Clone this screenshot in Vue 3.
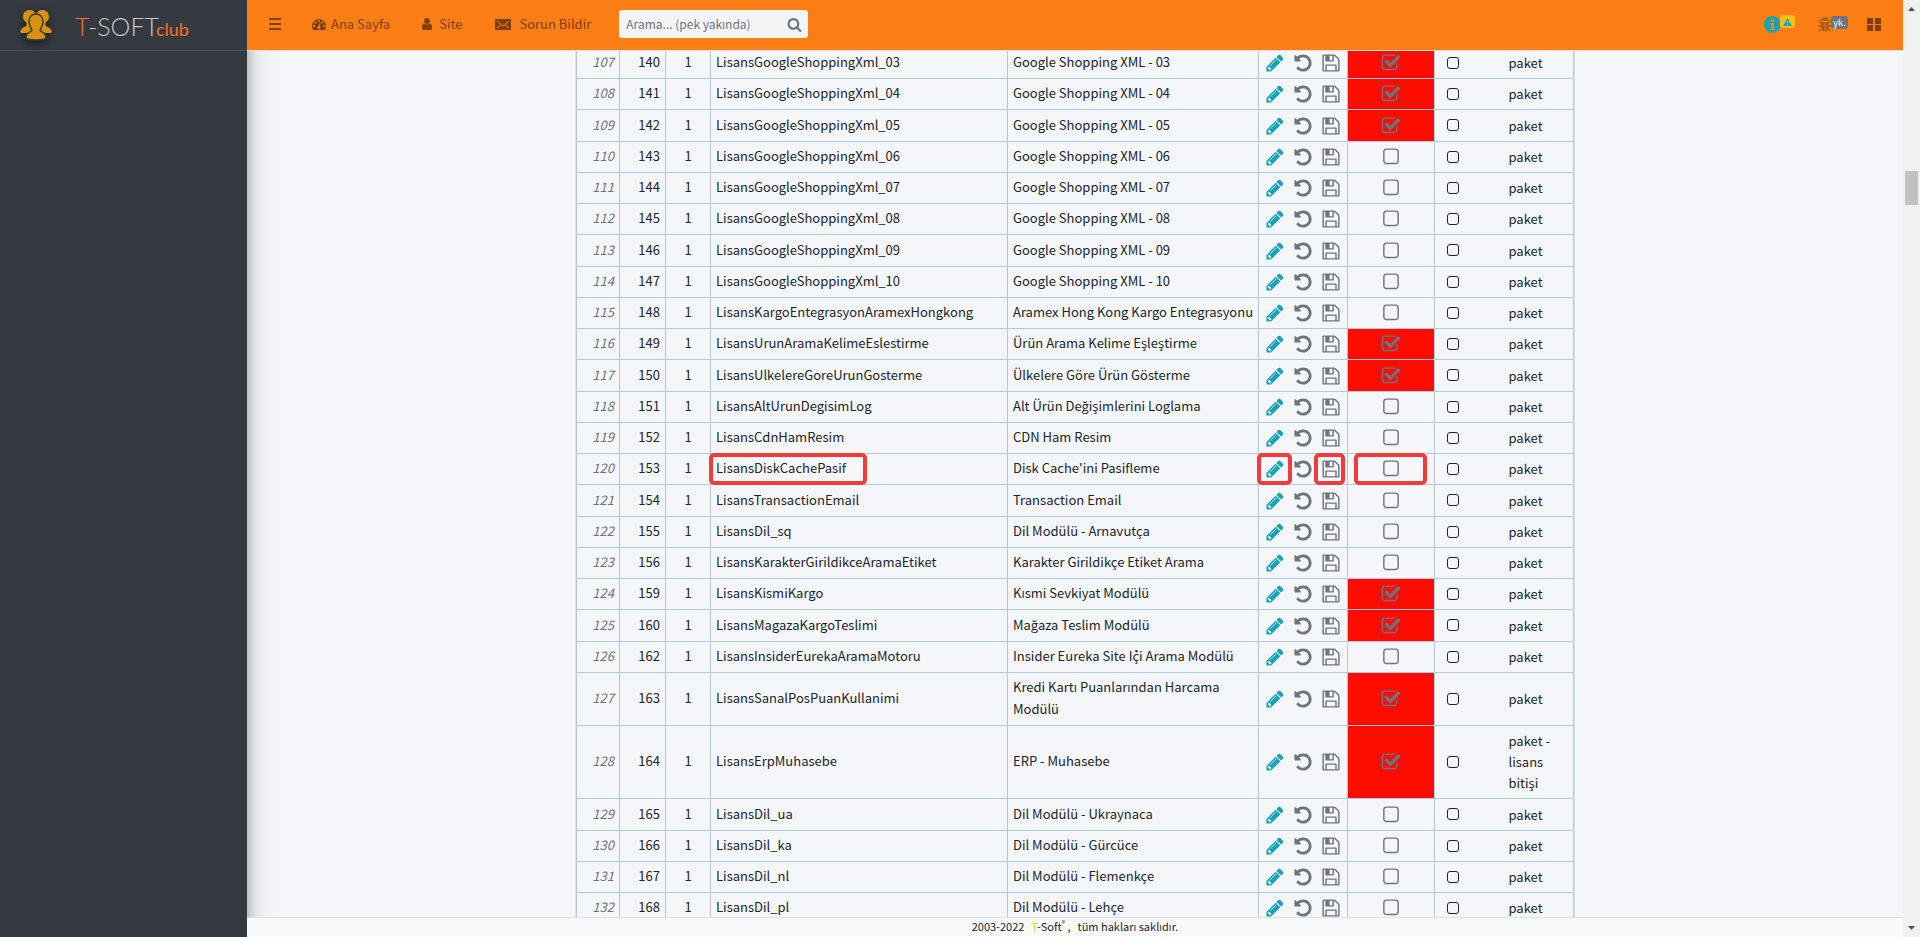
<script setup>
import { ref } from 'vue'

const icons = {
  pencil: 'M491 1536l91-91-235-235-91 91v107h128v128h107zm523-928q0-22-22-22-10 0-17 7l-542 542q-7 7-7 17 0 22 22 22 10 0 17-7l542-542q7-7 7-17zm-54-192l416 416-832 832h-416v-416zm683 96q0 53-37 90l-166 166-416-416 166-165q36-38 90-38 53 0 91 38l235 234q37 39 37 91z',
  undo: 'M1664 896q0 156-61 298t-164 245-245 164-298 61q-172 0-327-72.5t-264-204.5q-7-10-6.5-22.5t8.5-20.5l137-138q10-9 25-9 16 2 23 12 73 95 179 147t225 52q104 0 198.5-40.5t163.5-109.5 109.5-163.5 40.5-198.5-40.5-198.5-109.5-163.5-163.5-109.5-198.5-40.5q-98 0-188 35.5t-160 101.5l137 138q31 30 14 69-17 40-59 40h-448q-26 0-45-19t-19-45v-448q0-42 40-59 39-17 69 14l130 129q107-101 244.5-156.5t284.5-55.5q156 0 298 61t245 164 164 245 61 298z',
  save: 'M512 1536h768v-384h-768v384zm896 0h128v-896q0-14-10-38.5t-20-34.5l-281-281q-10-10-34-20t-39-10v416q0 40-28 68t-68 28h-576q-40 0-68-28t-28-68v-416h-128v1280h128v-416q0-40 28-68t68-28h832q40 0 68 28t28 68v416zm-384-928v-320q0-13-9.5-22.5t-22.5-9.5h-192q-13 0-22.5 9.5t-9.5 22.5v320q0 13 9.5 22.5t22.5 9.5h192q13 0 22.5-9.5t9.5-22.5zm640 32v928q0 40-28 68t-68 28h-1344q-40 0-68-28t-28-68v-1344q0-40 28-68t68-28h928q40 0 88 20t76 48l280 280q28 28 48 76t20 88z',
  checked: 'M1472 930v318q0 119-84.5 203.5t-203.5 84.5h-832q-119 0-203.5-84.5t-84.5-203.5v-832q0-119 84.5-203.5t203.5-84.5h832q63 0 117 25 15 7 18 23 3 17-9 29l-49 49q-10 10-23 10-3 0-9-2-23-6-45-6h-832q-66 0-113 47t-47 113v832q0 66 47 113t113 47h832q66 0 113-47t47-113v-254q0-13 9-22l64-64q10-10 23-10 6 0 12 3 20 8 20 29zm231-489l-814 814q-24 24-57 24t-57-24l-430-430q-24-24-24-57t24-57l110-110q24-24 57-24t57 24l263 263 647-647q24-24 57-24t57 24l110 110q24 24 24 57t-24 57z',
  empty: 'M1312 256h-832q-66 0-113 47t-47 113v832q0 66 47 113t113 47h832q66 0 113-47t47-113v-832q0-66-47-113t-113-47zm288 160v832q0 119-84.5 203.5t-203.5 84.5h-832q-119 0-203.5-84.5t-84.5-203.5v-832q0-119 84.5-203.5t203.5-84.5h832q119 0 203.5 84.5t84.5 203.5z',
  dash: 'M384 1152q0-53-37.5-90.5t-90.5-37.5-90.5 37.5-37.5 90.5 37.5 90.5 90.5 37.5 90.5-37.5 37.5-90.5zm192-448q0-53-37.5-90.5t-90.5-37.5-90.5 37.5-37.5 90.5 37.5 90.5 90.5 37.5 90.5-37.5 37.5-90.5zm428 481l101-382q6-26-7.5-48.5t-38.5-29.5-48 6.5-30 39.5l-101 382q-60 5-107 43.5t-63 98.5q-20 77 20 146t117 89 146-20 89-117q16-60-6-117t-72-91zm660-33q0-53-37.5-90.5t-90.5-37.5-90.5 37.5-37.5 90.5 37.5 90.5 90.5 37.5 90.5-37.5 37.5-90.5zm-640-640q0-53-37.5-90.5t-90.5-37.5-90.5 37.5-37.5 90.5 37.5 90.5 90.5 37.5 90.5-37.5 37.5-90.5zm448 192q0-53-37.5-90.5t-90.5-37.5-90.5 37.5-37.5 90.5 37.5 90.5 90.5 37.5 90.5-37.5 37.5-90.5zm320 448q0 261-141 483-19 29-54 29h-1402q-35 0-54-29-141-221-141-483 0-182 71-348t191-286 286-191 348-71 348 71 286 191 191 286 71 348z',
  user: 'M1536 1399q0 109-62.5 187t-150.5 78h-854q-88 0-150.5-78t-62.5-187q0-85 8.5-160.5t31.5-152 58.5-131 94-89 134.5-34.5q131 128 313 128t313-128q76 0 134.5 34.5t94 89 58.5 131 31.5 152 8.5 160.5zm-256-887q0 159-112.5 271.5t-271.5 112.5-271.5-112.5-112.5-271.5 112.5-271.5 271.5-112.5 271.5 112.5 112.5 271.5z',
  search: 'M1216 832q0-185-131.5-316.5t-316.5-131.5-316.5 131.5-131.5 316.5 131.5 316.5 316.5 131.5 316.5-131.5 131.5-316.5zm512 832q0 52-38 90t-90 38q-54 0-90-38l-343-342q-179 124-399 124-143 0-273.5-55.5t-225-150-150-225-55.5-273.5 55.5-273.5 150-225 225-150 273.5-55.5 273.5 55.5 225 150 150 225 55.5 273.5q0 220-124 399l343 343q37 37 37 90z',
}

const rows = ref([
  [140, 'GoogleShoppingXml_03', 'Google Shopping XML - 03', true],
  [141, 'GoogleShoppingXml_04', 'Google Shopping XML - 04', true],
  [142, 'GoogleShoppingXml_05', 'Google Shopping XML - 05', true],
  [143, 'GoogleShoppingXml_06', 'Google Shopping XML - 06', false],
  [144, 'GoogleShoppingXml_07', 'Google Shopping XML - 07', false],
  [145, 'GoogleShoppingXml_08', 'Google Shopping XML - 08', false],
  [146, 'GoogleShoppingXml_09', 'Google Shopping XML - 09', false],
  [147, 'GoogleShoppingXml_10', 'Google Shopping XML - 10', false],
  [148, 'KargoEntegrasyonAramexHongkong', 'Aramex Hong Kong Kargo Entegrasyonu', false],
  [149, 'UrunAramaKelimeEslestirme', 'Ürün Arama Kelime Eşleştirme', true],
  [150, 'UlkelereGoreUrunGosterme', 'Ülkelere Göre Ürün Gösterme', true],
  [151, 'AltUrunDegisimLog', 'Alt Ürün Değişimlerini Loglama', false],
  [152, 'CdnHamResim', 'CDN Ham Resim', false],
  [153, 'DiskCachePasif', "Disk Cache'ini Pasifleme", false],
  [154, 'TransactionEmail', 'Transaction Email', false],
  [155, 'Dil_sq', 'Dil Modülü - Arnavutça', false],
  [156, 'KarakterGirildikceAramaEtiket', 'Karakter Girildikçe Etiket Arama', false],
  [159, 'KismiKargo', 'Kısmi Sevkiyat Modülü', true],
  [160, 'MagazaKargoTeslimi', 'Mağaza Teslim Modülü', true],
  [162, 'InsiderEurekaAramaMotoru', 'Insider Eureka Site İçi Arama Modülü', false],
  [163, 'SanalPosPuanKullanimi', 'Kredi Kartı Puanlarından Harcama Modülü', true],
  [164, 'ErpMuhasebe', 'ERP - Muhasebe', true, 'paket - lisans bitişi'],
  [165, 'Dil_ua', 'Dil Modülü - Ukraynaca', false],
  [166, 'Dil_ka', 'Dil Modülü - Gürcüce', false],
  [167, 'Dil_nl', 'Dil Modülü - Flemenkçe', false],
  [168, 'Dil_pl', 'Dil Modülü - Lehçe', false],
].map(([id, key, title, active, kind = 'paket'], i) => ({
  no: 107 + i, id, key: 'Lisans' + key, title, active, kind, extra: false, marked: id === 153,
})))
</script>

<template>
  <div class="shell">
    <aside class="sidebar">
      <a class="brand" href="#">
        <svg class="emblem" width="36" height="32" viewBox="0 0 36 32" aria-hidden="true">
          <g fill="#d8920f">
            <path d="M5 8C5 3 8 1 12 1s6 3 6 8l-2 10-4 5H4C1 24 2 20 6 18c3-1 3-3 2-5-2-1-3-3-3-5z" />
            <path d="M31 8c0-5-3-7-7-7s-6 3-6 8l2 10 4 5h8c3 0 2-4-2-6-3-1-3-3-2-5 2-1 3-3 3-5z" />
          </g>
          <path fill="#d8920f" stroke="#343a40" stroke-width="1.5" d="M18 5c-4 0-7 3-7 8 0 3 2 6 3 8 0 2-6 2-6 7 0 3 4 3 10 3s10 0 10-3c0-5-6-5-6-7 1-2 3-5 3-8 0-5-3-8-7-8z" />
        </svg>
        <span class="wordmark"><span class="accent">T</span>-SOFT<span class="club">club</span></span>
      </a>
    </aside>

    <div class="page">
      <header class="topbar">
        <nav class="links" aria-label="Ana menü">
          <button class="menu" type="button" aria-label="Menü">
            <svg width="14" height="14" viewBox="0 0 14 14"><path fill="none" stroke="currentColor" stroke-width="2" d="M1 2h12M1 7h12M1 12h12" /></svg>
          </button>
          <a class="home" href="#"><svg width="14" height="14" viewBox="0 0 1792 1792"><path :d="icons.dash" /></svg>Ana Sayfa</a>
          <a class="site" href="#"><svg width="14" height="14" viewBox="0 0 1792 1792"><path :d="icons.user" /></svg>Site</a>
          <a class="report" href="#"><svg width="16" height="14" viewBox="0 0 16 14"><path d="M0 2h16v11H0z" /><path d="M2 4l6 5 6-5M2 11l4-3M14 11l-4-3" fill="none" stroke="#fd7e14" /></svg>Sorun Bildir</a>
        </nav>
        <form class="search" role="search" @submit.prevent>
          <input type="search" aria-label="Arama" placeholder="Arama... (pek yakında)" />
          <button type="submit" aria-label="Ara"><svg width="15" height="15" viewBox="0 0 1792 1792"><path :d="icons.search" /></svg></button>
        </form>
        <div class="tools">
          <button class="info" type="button" aria-label="Bilgi">
            <svg width="17" height="17" viewBox="0 0 17 17"><circle cx="8.500" cy="8.500" r="8.500" fill="#17a2b8" /><path fill="#fd7e14" d="M7 3h3v3H7zM6 7h4v6h1v1H6v-1h1V8H6z" /></svg>
            <span class="badge warn"><svg width="9" height="8" viewBox="0 0 9 8"><path fill="#17a2b8" d="M4.500 0L9 8H0z" /><path fill="#ffc107" d="M4 3h1v2H4zM4 6h1v1H4z" /></svg></span>
          </button>
          <button class="bug" type="button" aria-label="Hatalar">
            <svg width="14" height="15" viewBox="0 0 14 15"><path fill="#ad5d18" d="M3 4c0-5 8-5 8 0zM3 5h3.700v9.500C4 14.500 3 12 3 10zM7.300 5H11v5c0 2-1 4.500-3.700 4.500z" /><path d="M3 6L1 3M3 9H0M4 11l-3 3.500M11 6l2-3M11 9h3M10 11l3 3.500" stroke="#ad5d18" stroke-width="1.400" fill="none" /></svg>
            <span class="badge soon">yk.</span>
          </button>
          <button class="apps" type="button" aria-label="Uygulamalar">
            <svg width="14" height="13" viewBox="0 0 14 13"><path fill="currentColor" d="M0 0h6v6H0zM8 0h6v6H8zM0 7h6v6H0zM8 7h6v6H8z" /></svg>
          </button>
        </div>
      </header>

      <main class="content">
        <table class="licences">
          <colgroup>
            <col class="c-no" /><col class="c-id" /><col class="c-one" /><col class="c-key" /><col class="c-title" />
            <col class="c-actions" /><col class="c-active" /><col class="c-extra" /><col class="c-kind" />
          </colgroup>
          <tbody>
            <tr v-for="row in rows" :key="row.id" :class="{ marked: row.marked }">
              <td class="no">{{ row.no }}</td>
              <td class="id">{{ row.id }}</td>
              <td class="one">1</td>
              <td class="key"><span>{{ row.key }}</span></td>
              <td class="title">{{ row.title }}</td>
              <td class="actions">
                <div>
                  <button class="edit" type="button" :aria-label="'Düzenle ' + row.key"><svg width="20" height="20" viewBox="0 0 1792 1792"><path :d="icons.pencil" /></svg></button>
                  <button type="button" :aria-label="'Geri al ' + row.key"><svg width="20" height="20" viewBox="0 0 1792 1792"><path :d="icons.undo" /></svg></button>
                  <button class="save" type="button" :aria-label="'Kaydet ' + row.key"><svg width="20" height="20" viewBox="0 0 1792 1792"><path :d="icons.save" /></svg></button>
                </div>
              </td>
              <td class="active" :class="{ on: row.active }">
                <label>
                  <input v-model="row.active" type="checkbox" :aria-label="'Aktif ' + row.key" />
                  <svg width="20" height="20" viewBox="0 0 1792 1792"><path :d="row.active ? icons.checked : icons.empty" /></svg>
                </label>
              </td>
              <td class="extra"><input v-model="row.extra" type="checkbox" :aria-label="'Seç ' + row.key" /></td>
              <td class="kind">{{ row.kind }}</td>
            </tr>
          </tbody>
        </table>
      </main>

      <footer class="footer">
        <span>2003-2022</span>
        <span><span class="gold">T</span>-Soft<sup>®</sup> ,</span>
        <span>tüm hakları saklıdır.</span>
      </footer>
    </div>

    <div class="scrollbar" aria-hidden="true">
      <svg width="17" height="17" viewBox="0 0 17 17"><path fill="#505050" d="M5 11h7L8.500 7z" /></svg>
      <div class="thumb"></div>
      <svg width="17" height="17" viewBox="0 0 17 17"><path fill="#505050" d="M5 6h7l-3.500 4z" /></svg>
    </div>
  </div>
</template>

<style>
body {
  overflow: hidden;
}
</style>

<style scoped>
.shell {
  display: flex;
  height: 100vh;
  background: #f4f6f9;
  color: #212529;
  font: 13px/22px "Noto Sans CJK SC", "Open Sans", sans-serif;
}
.shell *,
.shell *::after {
  box-sizing: border-box;
}
svg {
  display: block;
  flex: none;
}
button {
  display: flex;
  align-items: center;
  padding: 0;
  border: 0;
  background: none;
  color: inherit;
  font: inherit;
  cursor: pointer;
}
a {
  color: inherit;
  text-decoration: none;
}
.sidebar {
  flex: none;
  width: 247px;
  background: #343a40;
  box-shadow: 0 14px 28px rgba(0, 0, 0, .25), 0 10px 10px rgba(0, 0, 0, .22);
  z-index: 1;
}
.brand {
  display: flex;
  align-items: center;
  height: 51px;
  padding-left: 18px;
  gap: 21px;
  border-bottom: 1px solid #4b545c;
}
.emblem {
  filter: drop-shadow(0 3px 4px rgba(0, 0, 0, .5));
}
.wordmark {
  padding-top: 4px;
  color: #c2c7d0;
  font: 300 25px/32px Lato, sans-serif;
  white-space: nowrap;
}
.accent,
.club {
  color: #f96f2b;
}
.club {
  margin-left: -3px;
  font-size: 18px;
  font-weight: 400;
}
.page {
  display: flex;
  flex: 1;
  flex-direction: column;
  min-width: 0;
}
.topbar {
  display: flex;
  flex: none;
  align-items: center;
  height: 51px;
  padding: 0 22px 2px 21px;
  border-bottom: 1px solid #dee2e6;
  background: #fd7e14;
  color: #7f3f0a;
  position: relative;
  z-index: 2;
}
.links {
  display: flex;
  align-items: center;
}
.links a {
  display: flex;
  align-items: center;
  gap: 5px;
}
.links svg {
  fill: currentColor;
}
.home {
  margin-left: 30px;
}
.site {
  margin-left: 30px;
}
.links .report {
  margin-left: 33px;
  gap: 8px;
}
.search {
  display: flex;
  align-items: center;
  width: 189px;
  height: 28px;
  margin-left: 28px;
  padding: 0 6px 0 7px;
  border-radius: 3px;
  background: #f2f4f6;
}
.search input {
  flex: 1;
  min-width: 0;
  padding: 0;
  border: 0;
  outline: 0;
  background: none;
  font: 12px/20px "Noto Sans CJK SC", "Open Sans", sans-serif;
}
.search input::placeholder {
  color: #6c757d;
  opacity: 1;
}
.search button {
  fill: #6c757d;
}
.tools {
  display: flex;
  align-items: center;
  margin-left: auto;
}
.tools .info,
.tools .bug {
  align-items: flex-start;
}
.info > svg,
.bug > svg {
  margin-top: 1px;
}
.badge {
  display: flex;
  flex: none;
  align-items: center;
  justify-content: center;
  height: 13px;
  margin-left: -1px;
  border-radius: 3px;
  font-size: 9px;
  line-height: 13px;
}
.warn {
  width: 15px;
  background: #ffc107;
}
.soon {
  width: 17px;
  background: #6c757d;
  color: #fff;
}
.bug {
  margin-left: 23px;
}
.apps {
  margin-left: 19px;
}
.content {
  flex: 1;
  min-height: 0;
  overflow: hidden;
}
.licences {
  width: calc(100% - 48px);
  max-width: 998px;
  margin: -4px auto 0;
  border-collapse: collapse;
  table-layout: fixed;
  outline: 1px solid #dee2e6;
}
.c-no { width: 43px; }
.c-id { width: 46px; }
.c-one { width: 45px; }
.c-title { width: 251px; }
.c-actions { width: 89px; }
.c-active { width: 87px; }
.c-extra { width: 69px; }
.c-kind { width: 70px; }
tr {
  height: 31px;
}
tr:nth-child(4n + 3) {
  height: 32px;
}
td {
  padding: 3px 5px 5px;
  border: 1px solid #b0c8e0;
  vertical-align: middle;
}
.no {
  color: #6c757d;
  font-style: italic;
  text-align: right;
}
.id {
  text-align: right;
}
.one {
  text-align: center;
}
.title {
  padding-right: 0;
}
.key,
.actions,
.active {
  position: relative;
}
.actions,
.active {
  padding: 0;
}
.actions div {
  display: flex;
  justify-content: center;
  gap: 8px;
}
.actions button {
  fill: #6c757d;
}
.actions .edit {
  fill: #17a2b8;
}
.active label {
  display: flex;
  justify-content: center;
  fill: #6c757d;
}
.active input {
  position: absolute;
  opacity: 0;
}
.on {
  background: #ff0c00;
}
.extra {
  padding: 0 12px 1px;
  border-right: 0;
}
.extra input {
  display: block;
  width: 12px;
  height: 12px;
  margin: 0;
  border: 1px solid #212529;
  border-radius: 3px;
  appearance: none;
}
.kind {
  padding: 4px 5px 5px;
  border-left: 0;
  line-height: 21px;
}
.marked .key span::after,
.marked .edit::after,
.marked .save::after,
.marked .active::after {
  position: absolute;
  top: -1px;
  bottom: -1px;
  border: 4px solid #f23c3c;
  border-radius: 5px;
  content: "";
}
.marked .key span::after {
  left: -2px;
  width: 158px;
}
.marked .edit::after {
  left: -2px;
  width: 35px;
}
.marked .save::after {
  right: 2px;
  width: 31px;
}
.marked .active::after {
  left: 6px;
  width: 73px;
}
.footer {
  display: flex;
  flex: none;
  justify-content: center;
  gap: 7px;
  height: 20px;
  border-top: 1px solid #dee2e6;
  background: #f8f9fa;
  font-size: 11px;
  line-height: 17px;
  position: relative;
  z-index: 2;
}
.gold {
  color: #ffc107;
}
sup {
  font-size: 7px;
  line-height: 1px;
}
.scrollbar {
  display: flex;
  flex: none;
  flex-direction: column;
  justify-content: space-between;
  width: 17px;
  background: #f1f1f1;
}
.thumb {
  height: 34px;
  margin: 154px 2px auto;
  background: #c1c1c1;
}
</style>
